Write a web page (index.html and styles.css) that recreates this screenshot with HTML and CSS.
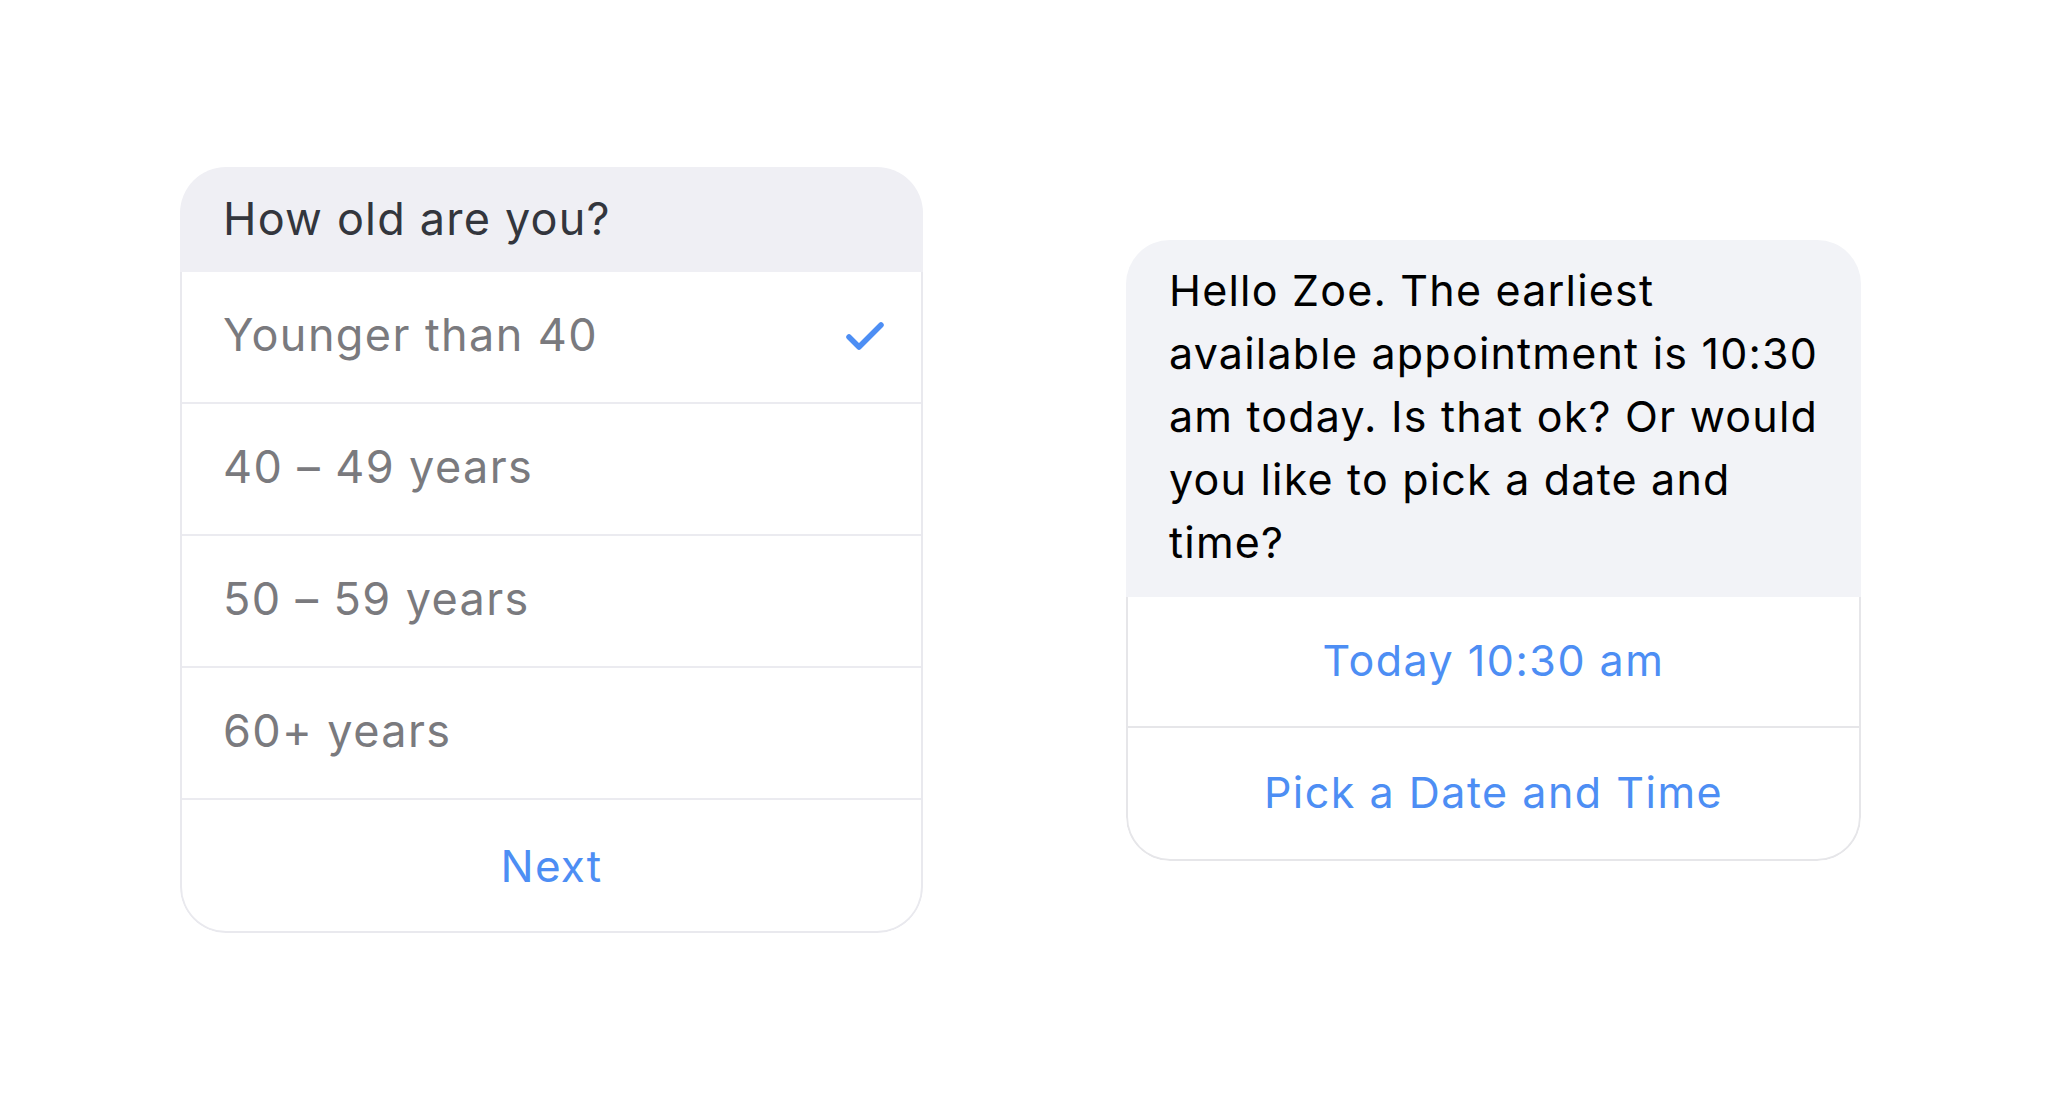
FILE: index.html
```html
<!DOCTYPE html>
<html>
<head>
<meta charset="utf-8">
<link rel="stylesheet" href="styles.css">
</head>
<body>
<main class="stage">
  <section class="card age-card">
    <div class="card-head">How old are you?</div>
    <div class="card-body">
      <div class="option">
        <span>Younger than 40</span>
        <svg class="check" width="40" height="32" viewBox="0 0 40 32"><polyline points="4,17 14,27 36,5" fill="none" stroke="#4d8ef4" stroke-width="5.5" stroke-linecap="round" stroke-linejoin="round"/></svg>
      </div>
      <div class="option"><span>40 – 49 years</span></div>
      <div class="option"><span>50 – 59 years</span></div>
      <div class="option"><span>60+ years</span></div>
      <div class="action action-last">Next</div>
    </div>
  </section>

  <section class="card chat-card">
    <div class="bubble">Hello Zoe. The earliest<br>available appointment is 10:30<br>am today. Is that ok? Or would<br>you like to pick a date and<br>time?</div>
    <div class="card-body">
      <div class="action">Today 10:30 am</div>
      <div class="action action-last">Pick a Date and Time</div>
    </div>
  </section>
</main>
</body>
</html>
```

FILE: styles.css
```css
html, body {
  margin: 0;
  padding: 0;
  background: #ffffff;
}

body {
  font-family: Inter, "Noto Sans", "Liberation Sans", sans-serif;
}

.stage {
  height: 1100px;
  display: flex;
  align-items: center;
  padding-left: 180px;
  gap: 203px;
  box-sizing: border-box;
}

.card {
  display: flex;
  flex-direction: column;
  border-radius: 46px;
  overflow: hidden;
  background: #ffffff;
}

.age-card {
  width: 743px;
}

.chat-card {
  width: 735px;
  border-radius: 44px;
}

.card-head {
  height: 105px;
  background: #efeff4;
  color: #33363d;
  font-size: 45px;
  letter-spacing: 1.2px;
  display: flex;
  align-items: center;
  padding: 0 43px 2px;
  box-sizing: border-box;
}

.card-body {
  border: 2px solid #e9e9ee;
  border-top: none;
  border-radius: 0 0 46px 46px;
}

.chat-card .card-body {
  border-color: #e6e6e9;
  border-radius: 0 0 44px 44px;
}

.option {
  height: 132px;
  box-sizing: border-box;
  border-bottom: 2px solid #ebebf0;
  display: flex;
  align-items: center;
  justify-content: space-between;
  padding: 0 30px 6px 41px;
  color: #7a7a7e;
  font-size: 45px;
  letter-spacing: 1.4px;
}

.check {
  display: block;
  margin-right: 6px;
  margin-top: 4px;
}

.action {
  height: 131px;
  box-sizing: border-box;
  display: flex;
  align-items: center;
  justify-content: center;
  color: #4d8ef4;
  font-size: 43px;
  letter-spacing: 1.5px;
  padding-bottom: 2px;
  border-bottom: 2px solid #e6e6e9;
}

.age-card .action {
  height: 131px;
  font-size: 44px;
  letter-spacing: 1.2px;
  padding-bottom: 0;
}

.action-last {
  border-bottom: none;
}

.bubble {
  background: #f2f3f7;
  color: #000000;
  font-size: 43px;
  letter-spacing: 1.2px;
  line-height: 63px;
  padding: 19px 20px 20px 43px;
  height: 357px;
  box-sizing: border-box;
  white-space: nowrap;
}
```
